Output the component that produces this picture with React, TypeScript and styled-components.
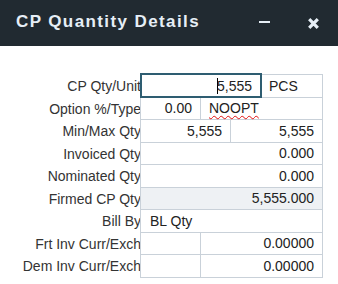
import * as React from "react";
import styled, { createGlobalStyle } from "styled-components";

const GlobalStyle = createGlobalStyle`
  html, body {
    margin: 0;
    padding: 0;
    background: #fff;
  }
  body {
    font-family: "Liberation Sans", Arial, sans-serif;
  }
`;

const Dialog = styled.div`
  width: 338px;
  height: 284px;
  overflow: hidden;
  background: #fff;
`;

const Header = styled.header`
  height: 46px;
  box-sizing: border-box;
  display: flex;
  align-items: center;
  padding: 0 19px 0 16px;
  background: #212a31;
`;

const Title = styled.h1`
  flex: 1;
  margin: 0 0 3px;
  font-size: 17px;
  font-weight: bold;
  letter-spacing: 1.4px;
  color: #e6eef6;
  white-space: nowrap;
`;

const Controls = styled.div`
  display: flex;
  align-items: center;
  gap: 38px;
`;

const IconButton = styled.button<{ $lift?: number }>`
  display: flex;
  padding: 0;
  margin: 0 0 ${(p) => p.$lift ?? 0}px;
  border: none;
  background: transparent;
  color: #e6eef6;
  cursor: pointer;
`;

const Form = styled.div`
  padding-top: 28px;
`;

const Row = styled.div<{ $first?: boolean }>`
  display: flex;
  height: ${(p) => (p.$first ? "23.5px" : "22.5px")};
`;

const Label = styled.div`
  width: 140px;
  flex: none;
  overflow: hidden;
  display: flex;
  justify-content: flex-end;
  align-items: center;
  white-space: nowrap;
  font-size: 14px;
  color: #333;

  span {
    margin-right: -1px;
  }
`;

const Field = styled.div<{ $first?: boolean; $shade?: boolean }>`
  width: 183px;
  flex: none;
  box-sizing: border-box;
  display: flex;
  border: 1px solid #c9d1d9;
  border-top-width: ${(p) => (p.$first ? 1 : 0)}px;
  background: ${(p) => (p.$shade ? "#eef1f4" : "#fff")};
`;

const Cell = styled.div<{ $w?: number; $right?: boolean; $divider?: boolean; $pad?: number }>`
  flex: ${(p) => (p.$w ? `0 0 ${p.$w}px` : "1 1 auto")};
  box-sizing: border-box;
  display: flex;
  align-items: center;
  justify-content: ${(p) => (p.$right ? "flex-end" : "flex-start")};
  padding: 0 8px 0 ${(p) => p.$pad ?? 8}px;
  border-right: ${(p) => (p.$divider ? "1px solid #c9d1d9" : "none")};
  font-size: 14px;
  color: #222;
  white-space: nowrap;
`;

const FocusCell = styled(Cell)`
  position: relative;

  &::after {
    content: "";
    position: absolute;
    left: -1px;
    top: -2px;
    right: -2px;
    bottom: -1px;
    border: 2px solid #2e5d71;
    pointer-events: none;
  }
`;

const Caret = styled.span`
  width: 1px;
  height: 16px;
  background: #000;
  margin-right: -1px;
`;

const Misspelled = styled.span`
  text-decoration: underline wavy #e01010;
  text-decoration-thickness: 1px;
  text-underline-offset: 2px;
`;

type FieldRowProps = {
  label: string;
  first?: boolean;
  shade?: boolean;
  children: React.ReactNode;
};

function FieldRow({ label, first, shade, children }: FieldRowProps) {
  return (
    <Row $first={first}>
      <Label>
        <span>{label}</span>
      </Label>
      <Field $first={first} $shade={shade}>
        {children}
      </Field>
    </Row>
  );
}

export default function App() {
  return (
    <>
      <GlobalStyle />
      <Dialog>
        <Header>
          <Title>CP Quantity Details</Title>
          <Controls>
            <IconButton $lift={2} aria-label="Minimize">
              <svg width="11" height="2" viewBox="0 0 11 2">
                <rect width="11" height="2" fill="currentColor" />
              </svg>
            </IconButton>
            <IconButton aria-label="Close">
              <svg width="11" height="11" viewBox="0 0 11 11">
                <path d="M1.2 1.2L9.8 9.8M9.8 1.2L1.2 9.8" stroke="currentColor" strokeWidth="3.2" />
              </svg>
            </IconButton>
          </Controls>
        </Header>

        <Form>
          <FieldRow label="CP Qty/Unit" first>
            <FocusCell $w={120} $right $divider>
              <Caret />
              5,555
            </FocusCell>
            <Cell>PCS</Cell>
          </FieldRow>
          <FieldRow label="Option %/Type">
            <Cell $w={60} $right $divider>0.00</Cell>
            <Cell>
              <Misspelled>NOOPT</Misspelled>
            </Cell>
          </FieldRow>
          <FieldRow label="Min/Max Qty">
            <Cell $w={90} $right $divider>5,555</Cell>
            <Cell $right>5,555</Cell>
          </FieldRow>
          <FieldRow label="Invoiced Qty">
            <Cell $right>0.000</Cell>
          </FieldRow>
          <FieldRow label="Nominated Qty">
            <Cell $right>0.000</Cell>
          </FieldRow>
          <FieldRow label="Firmed CP Qty" shade>
            <Cell $right>5,555.000</Cell>
          </FieldRow>
          <FieldRow label="Bill By">
            <Cell $pad={9}>BL Qty</Cell>
          </FieldRow>
          <FieldRow label="Frt Inv Curr/Exch">
            <Cell $w={60} $divider />
            <Cell $right>0.00000</Cell>
          </FieldRow>
          <FieldRow label="Dem Inv Curr/Exch">
            <Cell $w={60} $divider />
            <Cell $right>0.00000</Cell>
          </FieldRow>
        </Form>
      </Dialog>
    </>
  );
}
